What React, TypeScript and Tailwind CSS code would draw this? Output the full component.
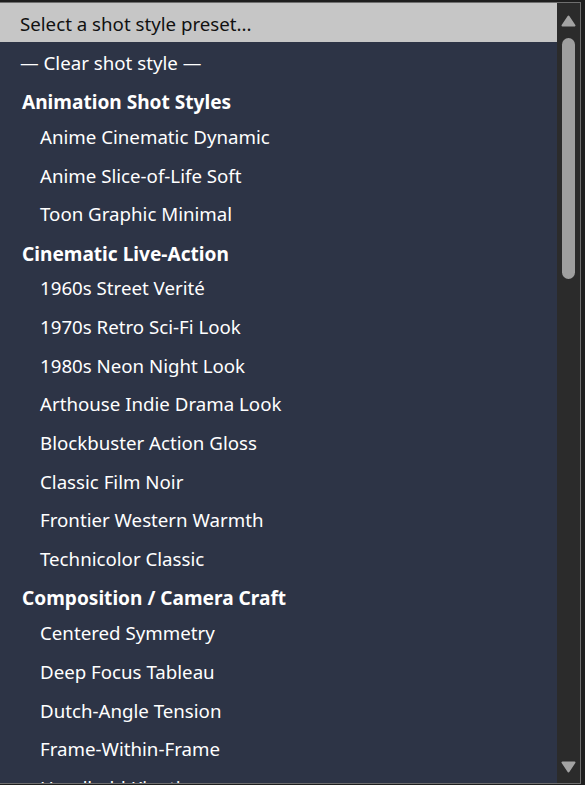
import React from 'react';

type Item = { kind: 'head' | 'opt'; label: string };

const items: Item[] = [
  { kind: 'head', label: 'Animation Shot Styles' },
  { kind: 'opt', label: 'Anime Cinematic Dynamic' },
  { kind: 'opt', label: 'Anime Slice-of-Life Soft' },
  { kind: 'opt', label: 'Toon Graphic Minimal' },
  { kind: 'head', label: 'Cinematic Live-Action' },
  { kind: 'opt', label: '1960s Street Verité' },
  { kind: 'opt', label: '1970s Retro Sci-Fi Look' },
  { kind: 'opt', label: '1980s Neon Night Look' },
  { kind: 'opt', label: 'Arthouse Indie Drama Look' },
  { kind: 'opt', label: 'Blockbuster Action Gloss' },
  { kind: 'opt', label: 'Classic Film Noir' },
  { kind: 'opt', label: 'Frontier Western Warmth' },
  { kind: 'opt', label: 'Technicolor Classic' },
  { kind: 'head', label: 'Composition / Camera Craft' },
  { kind: 'opt', label: 'Centered Symmetry' },
  { kind: 'opt', label: 'Deep Focus Tableau' },
  { kind: 'opt', label: 'Dutch-Angle Tension' },
  { kind: 'opt', label: 'Frame-Within-Frame' },
  { kind: 'opt', label: 'Handheld Kinetic' },
  { kind: 'opt', label: 'Low-Angle Heroic' },
];

function Arrow({ up }: { up?: boolean }) {
  return (
    <svg width="15" height="12" viewBox="0 0 15 12" className="block">
      <path
        d={up ? 'M7.5 1.5 L13.5 10.5 L1.5 10.5 Z' : 'M1.5 1.5 L13.5 1.5 L7.5 10.5 Z'}
        fill="#a3a3a3"
        stroke="#a3a3a3"
        strokeWidth="2"
        strokeLinejoin="round"
      />
    </svg>
  );
}

export default function App() {
  return (
    <div className="h-[785px] w-[585px] overflow-hidden bg-[#1e1e1e] pt-[2px] font-['Noto_Sans',sans-serif] text-[18.7px]">
      <div className="ml-[-1px] flex h-[782px] w-[582px] border border-[#6e6e6e]">
        <div className="flex-1 overflow-hidden bg-[#2d3446] text-white">
          <div className="h-[38.7px] whitespace-nowrap bg-[#c6c6c6] pl-[20px] pt-[4.3px] leading-[34.4px] text-[#111]">
            Select a shot style preset...
          </div>
          <div className="h-[38.7px] whitespace-nowrap pl-[20px] pt-[4.3px] leading-[34.4px]">
            — Clear shot style —
          </div>
          {items.map((it, i) =>
            it.kind === 'head' ? (
              <div
                key={i}
                className="h-[35.3px] whitespace-nowrap pl-[22px] pt-[9.9px] text-[19.1px] font-bold leading-[25.4px]"
              >
                {it.label}
              </div>
            ) : (
              <div
                key={i}
                className="h-[38.7px] whitespace-nowrap pl-[40px] pt-[4.3px] leading-[34.4px]"
              >
                {it.label}
              </div>
            )
          )}
        </div>
        <div className="flex w-[23px] flex-col items-center bg-[#2b2b2b] pt-[12px] pb-[10px]">
          <Arrow up />
          <div className="mt-[11px] h-[241px] w-[13px] rounded-full bg-[#9f9f9f]" />
          <div className="flex-1" />
          <Arrow />
        </div>
      </div>
    </div>
  );
}
